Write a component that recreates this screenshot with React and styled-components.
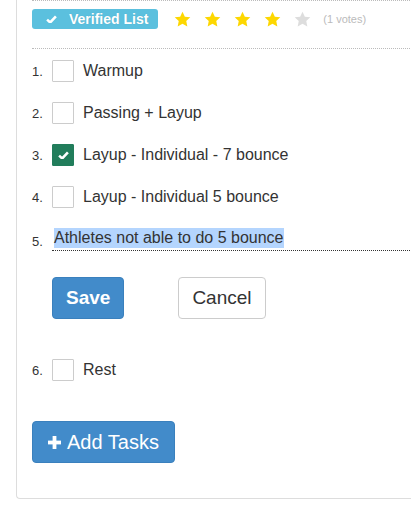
import styled, { createGlobalStyle } from "styled-components";

const GlobalStyle = createGlobalStyle`
  body {
    margin: 0;
    background: #fff;
    font-family: "Liberation Sans", Arial, sans-serif;
    color: #333;
    overflow: hidden;
  }
`;

const Panel = styled.div`
  margin-left: 16px;
  width: 420px;
  border-left: 1px solid #ddd;
  border-bottom: 1px solid #ddd;
  border-bottom-left-radius: 4px;
  padding: 0 0 35px 15px;
`;

const Header = styled.div`
  display: flex;
  align-items: center;
  height: 20px;
  padding: 8px 0 19px;
  border-top: 1px dotted #bbb;
  border-bottom: 1px dotted #bbb;
`;

const Badge = styled.span`
  display: inline-flex;
  align-items: center;
  height: 20px;
  padding: 0 10px 0 14px;
  gap: 12px;
  background: #5bc0de;
  border-radius: 3px;
  color: #fff;
  font-weight: bold;
  font-size: 14px;
  text-shadow: 0 0 1px rgba(0, 0, 0, 0.15);
`;

const Stars = styled.div`
  display: flex;
  gap: 13px;
  margin-left: 16px;
`;

const Votes = styled.span`
  margin-left: 12px;
  font-size: 11px;
  color: #bbb;
`;

const List = styled.div`
  padding-top: 11px;
`;

const Row = styled.div`
  display: flex;
  align-items: flex-start;
  margin-bottom: ${(p) => p.$mb ?? 20}px;
`;

const Num = styled.span`
  width: 20px;
  flex-shrink: 0;
  font-size: 13px;
  line-height: 20px;
  padding-top: ${(p) => p.$pt ?? 2}px;
`;

const Box = styled.span`
  display: inline-flex;
  align-items: center;
  justify-content: center;
  box-sizing: border-box;
  width: 22px;
  height: 22px;
  border: 1px solid ${(p) => (p.$checked ? "#217d5b" : "#ccc")};
  background: ${(p) => (p.$checked ? "#217d5b" : "#fff")};
  border-radius: 1px;
  flex-shrink: 0;
`;

const Label = styled.span`
  margin-left: 9px;
  font-size: 16px;
  line-height: 22px;
  color: #333;
`;

const Editable = styled.div`
  flex: 1;
  padding: 0 0 2px 2px;
  border-bottom: 1px dotted #333;
`;

const Selected = styled.span`
  display: inline-block;
  font-size: 16px;
  line-height: 20px;
  height: 20px;
  background: #b4d5fe;
  color: #333;
`;

const Actions = styled.div`
  display: flex;
  gap: 54px;
  margin: 0 0 40px 20px;
`;

const Button = styled.button`
  display: inline-flex;
  align-items: center;
  gap: ${(p) => p.$gap ?? 6}px;
  box-sizing: border-box;
  height: 42px;
  padding: 0 ${(p) => p.$px ?? 13}px;
  font-family: "Liberation Sans", Arial, sans-serif;
  font-size: ${(p) => p.$fs ?? 19}px;
  font-weight: ${(p) => (p.$bold ? "bold" : "normal")};
  border-radius: 4px;
  border: 1px solid ${(p) => (p.$primary ? "#3a80bd" : "#ccc")};
  background: ${(p) => (p.$primary ? "#428bca" : "#fff")};
  color: ${(p) => (p.$primary ? "#fff" : "#333")};
  cursor: pointer;
`;

const Check = ({ size = 11 }) => (
  <svg width={size} height={size * 0.8} viewBox="0 0 10 8">
    <path d="M1 4.2 L3.8 6.8 L9 1.2" fill="none" stroke="#fff" strokeWidth="2.3" />
  </svg>
);

const Star = ({ on }) => (
  <svg width="17" height="17" viewBox="0 0 24 24">
    <polygon
      points="12,1 15.3,8 23,8.9 17.3,14.2 18.8,22 12,18.1 5.2,22 6.7,14.2 1,8.9 8.7,8"
      fill={on ? "#fdd700" : "#ddd"}
    />
  </svg>
);

const PlusIcon = () => (
  <svg width="13" height="13" viewBox="0 0 13 13">
    <rect x="4.6" y="0" width="3.8" height="13" fill="#fff" />
    <rect x="0" y="4.6" width="13" height="3.8" fill="#fff" />
  </svg>
);

const tasks = [
  { n: 1, label: "Warmup" },
  { n: 2, label: "Passing + Layup" },
  { n: 3, label: "Layup - Individual - 7 bounce", done: true },
  { n: 4, label: "Layup - Individual 5 bounce" },
];

export default function App() {
  return (
    <>
      <GlobalStyle />
      <Panel>
        <Header>
          <Badge>
            <Check size={11} />
            Verified List
          </Badge>
          <Stars>
            {[1, 2, 3, 4, 5].map((i) => (
              <Star key={i} on={i <= 4} />
            ))}
          </Stars>
          <Votes>(1 votes)</Votes>
        </Header>
        <List>
          {tasks.map((t) => (
            <Row key={t.n}>
              <Num>{t.n}.</Num>
              <Box $checked={t.done}>{t.done && <Check size={11} />}</Box>
              <Label>{t.label}</Label>
            </Row>
          ))}
          <Row $mb={25}>
            <Num $pt={4}>5.</Num>
            <Editable>
              <Selected>Athletes not able to do 5 bounce</Selected>
            </Editable>
          </Row>
          <Actions>
            <Button $primary $bold>Save</Button>
            <Button>Cancel</Button>
          </Actions>
          <Row $mb={40}>
            <Num>6.</Num>
            <Box />
            <Label>Rest</Label>
          </Row>
          <Button $primary $px={15} $fs={20} $gap={6}>
            <PlusIcon />
            Add Tasks
          </Button>
        </List>
      </Panel>
    </>
  );
}
